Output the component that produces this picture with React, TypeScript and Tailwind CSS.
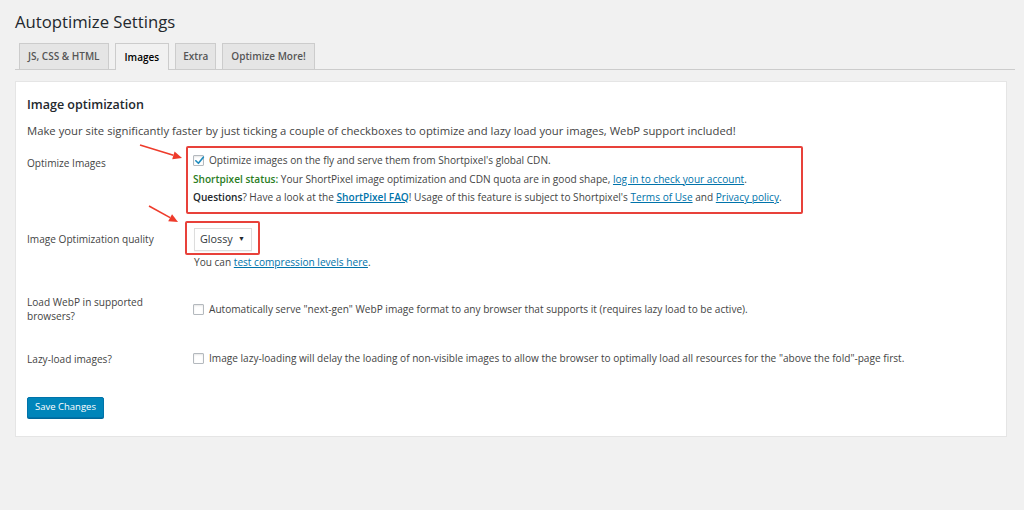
const font = { fontFamily: '"Open Sans", "Noto Sans", Arial, sans-serif' };

function Checkbox({ checked = false }: { checked?: boolean }) {
  return (
    <span className="relative inline-flex h-[11px] w-[11px] shrink-0 items-center justify-center rounded-[1px] border border-[#b4b9be] bg-white shadow-[inset_0_1px_2px_rgba(0,0,0,0.1)]">
      {checked && (
        <svg viewBox="0 0 12 12" className="absolute left-[0px] top-[-1px] h-[11px] w-[11px]">
          <path d="M2 6.3 L4.8 9 L10.2 2.4" fill="none" stroke="#1e8cbe" strokeWidth="1.8" strokeLinecap="round" strokeLinejoin="round" />
        </svg>
      )}
    </span>
  );
}

function Arrow({ x1, y1, x2, y2 }: { x1: number; y1: number; x2: number; y2: number }) {
  const a = Math.atan2(y2 - y1, x2 - x1);
  const len = 9;
  const w = 4;
  const bx = x2 - len * Math.cos(a);
  const by = y2 - len * Math.sin(a);
  const p1 = `${bx + w * Math.sin(a)},${by - w * Math.cos(a)}`;
  const p2 = `${bx - w * Math.sin(a)},${by + w * Math.cos(a)}`;
  return (
    <g>
      <line x1={x1} y1={y1} x2={bx} y2={by} stroke="#ee3b2b" strokeWidth="1.6" />
      <polygon points={`${x2},${y2} ${p1} ${p2}`} fill="#ee3b2b" />
    </g>
  );
}

export default function App() {
  return (
    <div className="relative h-[510px] w-full overflow-hidden bg-[#f1f1f1] text-[#444]" style={font}>
      <div className="pl-[15px] pr-[9px]">
        <h1 className="h-[44px] pt-[10px] text-[16.7px] leading-[24px] font-normal text-[#23282d]">Autoptimize Settings</h1>

        {/* tabs */}
        <div className="flex h-[26px] items-end gap-[6px] border-b border-[#ccc] pl-[4px]">
          <div className="flex h-[26px] items-center border border-b-0 border-[#ccc] bg-[#e5e5e5] px-[8px] text-[10px] font-semibold text-[#555]">JS, CSS &amp; HTML</div>
          <div className="-mb-px flex h-[27px] items-center border border-b-0 border-[#ccc] bg-[#f1f1f1] px-[9px] text-[10px] font-semibold text-black">Images</div>
          <div className="flex h-[26px] items-center border border-b-0 border-[#ccc] bg-[#e5e5e5] px-[7px] text-[10px] font-semibold text-[#555]">Extra</div>
          <div className="flex h-[26px] items-center border border-b-0 border-[#ccc] bg-[#e5e5e5] px-[8px] text-[10px] font-semibold text-[#555]">Optimize More!</div>
        </div>

        {/* panel */}
        <div className="mt-[11px] mr-[8px] h-[356px] border border-[#e5e5e5] bg-white pl-[11px] pt-[15px]">
          <h2 className="text-[12.5px] leading-[16px] font-semibold text-[#23282d]">Image optimization</h2>
          <p className="mt-[10px] text-[11.3px] leading-[16px] text-[#444]">
            Make your site significantly faster by just ticking a couple of checkboxes to optimize and lazy load your images, WebP support included!
          </p>

          {/* row 1 */}
          <div className="mt-[7px] flex text-[10.1px] text-[#444]">
            <div className="w-[159px] shrink-0 pt-[9px] leading-[16px]">Optimize Images</div>
            <div className="rounded-[2px] border-2 border-[#e8413a] pl-[5px] pr-[19px] pt-[3px] pb-[5px] leading-[18.5px]">
              <div className="flex items-center gap-[5px]">
                <Checkbox checked />
                <span>Optimize images on the fly and serve them from Shortpixel's global CDN.</span>
              </div>
              <div>
                <span className="font-semibold text-[#2a7d1e]">Shortpixel status:</span> Your ShortPixel image optimization and CDN quota are in good shape,{' '}
                <a className="text-[#0073aa] underline">log in to check your account</a>.
              </div>
              <div>
                <span className="font-semibold text-[#23282d]">Questions</span>? Have a look at the{' '}
                <a className="font-semibold text-[#0073aa] underline">ShortPixel FAQ</a>! Usage of this feature is subject to Shortpixel's{' '}
                <a className="text-[#0073aa] underline">Terms of Use</a> and <a className="text-[#0073aa] underline">Privacy policy</a>.
              </div>
            </div>
          </div>

          {/* row 2 */}
          <div className="mt-[7px] flex text-[10.1px] text-[#444]">
            <div className="w-[158px] shrink-0 pt-[10px] leading-[16px]">Image Optimization quality</div>
            <div>
              <div className="inline-block rounded-[2px] border-2 border-[#e8413a] pl-[7px] pr-[6px] pt-[5px] pb-[2px]">
                <div className="flex h-[23px] w-[58px] items-center justify-between border border-[#ddd] bg-white pl-[5px] pr-[6px] text-[10.8px] text-[#32373c] shadow-[0_1px_1px_rgba(0,0,0,0.04)]">
                  <span>Glossy</span>
                  <span className="text-[7px] text-[#23282d]">▼</span>
                </div>
              </div>
              <div className="-mt-px pl-[9px] leading-[16px]">
                You can <a className="text-[#0073aa] underline">test compression levels here</a>.
              </div>
            </div>
          </div>

          {/* row 3 */}
          <div className="mt-[25px] flex text-[10.1px] text-[#444]">
            <div className="w-[166px] shrink-0 leading-[14px]">
              Load WebP in supported
              <br />
              browsers?
            </div>
            <div className="mt-[6px] flex h-[18px] items-center gap-[5px]">
              <Checkbox />
              <span>Automatically serve "next-gen" WebP image format to any browser that supports it (requires lazy load to be active).</span>
            </div>
          </div>

          {/* row 4 */}
          <div className="mt-[28px] flex text-[10.1px] text-[#444]">
            <div className="w-[166px] shrink-0 leading-[16px]">Lazy-load images?</div>
            <div className="flex h-[16px] items-center gap-[5px]">
              <Checkbox />
              <span>Image lazy-loading will delay the loading of non-visible images to allow the browser to optimally load all resources for the "above the fold"-page first.</span>
            </div>
          </div>

          <button className="mt-[30px] flex h-[21px] items-center rounded-[2px] border border-[#0073aa] bg-[#0085ba] px-[7px] text-[9.5px] text-white shadow-[0_1px_0_#006799]">
            Save Changes
          </button>
        </div>
      </div>

      <svg className="pointer-events-none absolute left-0 top-0" width="1024" height="510">
        <Arrow x1={140} y1={145} x2={182} y2={158} />
        <Arrow x1={149} y1={206} x2={178} y2={222} />
      </svg>
    </div>
  );
}
